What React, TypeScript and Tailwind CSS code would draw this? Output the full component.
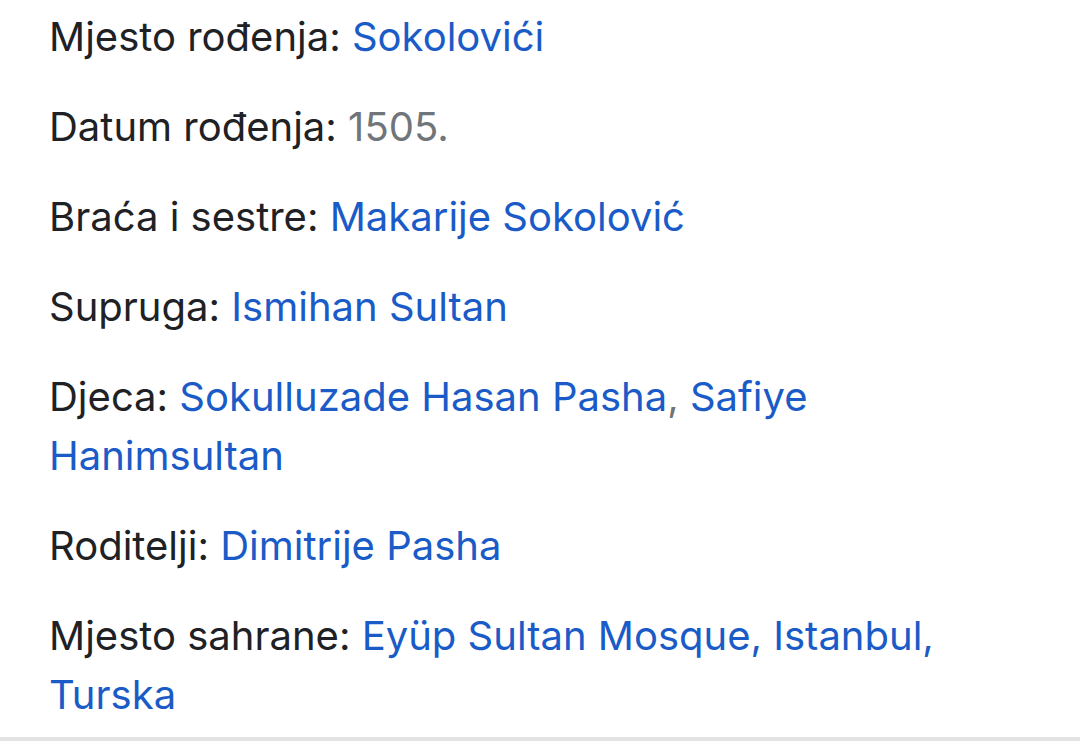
const rows: { label: string; parts: { text: string; kind: 'link' | 'muted' | 'sep' }[] }[] = [
  { label: 'Mjesto rođenja:', parts: [{ text: 'Sokolovići', kind: 'link' }] },
  { label: 'Datum rođenja:', parts: [{ text: '1505.', kind: 'muted' }] },
  { label: 'Braća i sestre:', parts: [{ text: 'Makarije Sokolović', kind: 'link' }] },
  { label: 'Supruga:', parts: [{ text: 'Ismihan Sultan', kind: 'link' }] },
  {
    label: 'Djeca:',
    parts: [
      { text: 'Sokulluzade Hasan Pasha', kind: 'link' },
      { text: ', ', kind: 'sep' },
      { text: 'Safiye Hanimsultan', kind: 'link' },
    ],
  },
  { label: 'Roditelji:', parts: [{ text: 'Dimitrije Pasha', kind: 'link' }] },
  { label: 'Mjesto sahrane:', parts: [{ text: 'Eyüp Sultan Mosque, Istanbul, Turska', kind: 'link' }] },
]

export default function App() {
  return (
    <div className="w-[1080px] h-[741px] bg-white flex flex-col overflow-hidden font-['Inter',sans-serif]">
      <div className="flex-1 pl-[49px] pr-[60px] pt-[7px] flex flex-col gap-[31px]">
        {rows.map((row) => (
          <div key={row.label} className="text-[40px] leading-[59px] text-[#202124]">
            {row.label}{' '}
            {row.parts.map((p, i) => (
              <span
                key={i}
                className={p.kind === 'link' ? 'text-[#1a5bc7]' : 'text-[#70757a]'}
              >
                {p.text}
              </span>
            ))}
          </div>
        ))}
      </div>
      <div className="h-[4px] bg-[#e3e3e3]" />
    </div>
  )
}
